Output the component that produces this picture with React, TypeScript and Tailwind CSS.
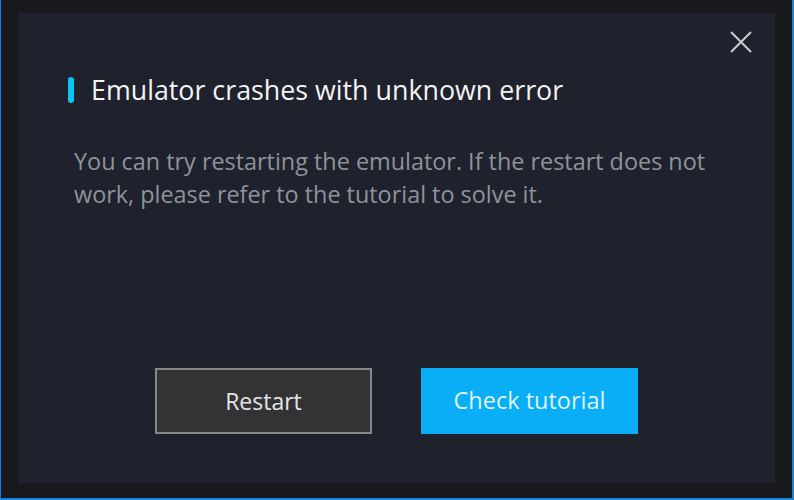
export default function App() {
  return (
    <div
      className="w-[794px] h-[500px] bg-[#18191d] border-l border-r-2 border-b-2 border-[#1784d8] flex"
      style={{ fontFamily: '"Open Sans", "Noto Sans", sans-serif' }}
    >
      <div className="ml-[17px] mt-[13px] w-[757px] h-[470px] bg-[#1f222c] relative flex flex-col">
        {/* Close */}
        <button className="absolute right-[23px] top-[18px] text-[#c9cbcf]" aria-label="Close">
          <svg width="22" height="22" viewBox="0 0 22 22" fill="none" stroke="currentColor" strokeWidth="2">
            <path d="M1 1L21 21M21 1L1 21" />
          </svg>
        </button>

        {/* Title */}
        <div className="flex items-center mt-[61px] ml-[50px]">
          <div className="w-[6px] h-[26px] rounded-full bg-[#0cc3f6]" />
          <h2 className="ml-[17px] text-[26.8px] leading-[32px] text-[#f2f3f5]">
            Emulator crashes with unknown error
          </h2>
        </div>

        {/* Body */}
        <p className="ml-[56px] mt-[39px] w-[680px] text-[23.4px] leading-[33px] text-[#8e939b]">
          You can try restarting the emulator. If the restart does not work, please refer to the tutorial to solve it.
        </p>

        {/* Actions */}
        <div className="mt-auto mb-[49px] ml-[137px] flex gap-[49px]">
          <button className="w-[217px] h-[66px] bg-[#333335] border-2 border-[#86878a] text-[23px] text-[#e4e5e7]">
            Restart
          </button>
          <button className="w-[217px] h-[66px] bg-[#0aaef6] text-[23.5px] text-[#dff4ff]">
            Check tutorial
          </button>
        </div>
      </div>
    </div>
  );
}
